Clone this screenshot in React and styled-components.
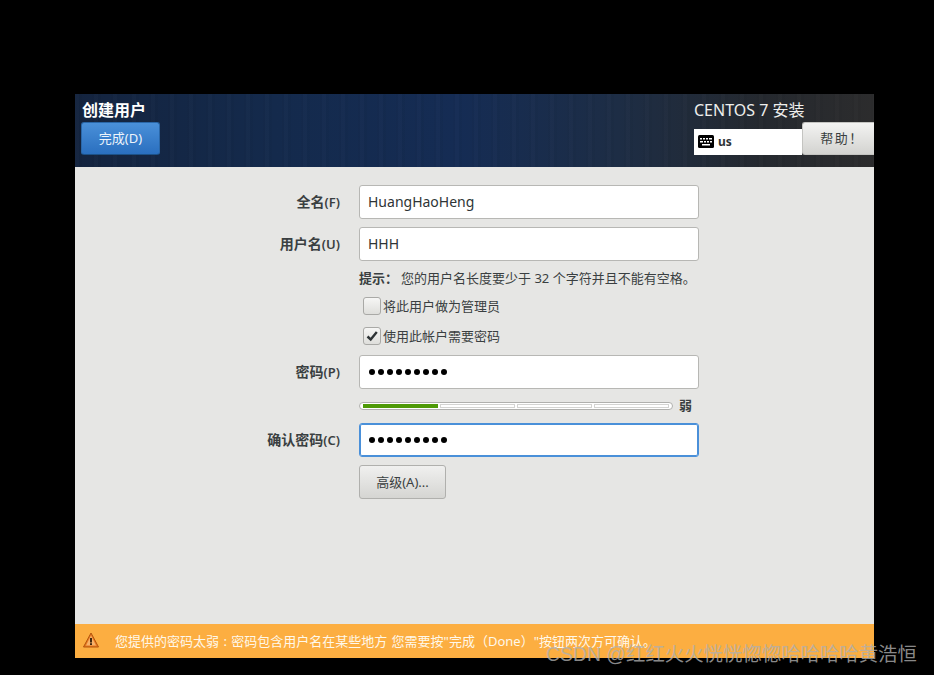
import React from 'react';
import styled, { createGlobalStyle } from 'styled-components';

const GlobalStyle = createGlobalStyle`
  html, body {
    margin: 0;
    height: 100%;
    background: #000;
  }
  body {
    font-family: "Noto Sans", "Noto Sans CJK SC", sans-serif;
    font-size: 13px;
    color: #2e3436;
  }
`;

const Screen = styled.div`
  position: relative;
  width: 934px;
  height: 675px;
  padding: 94px 60px 17px 75px;
  box-sizing: border-box;
  overflow: hidden;
  background: #000;
`;

const Installer = styled.div`
  width: 799px;
  height: 564px;
  display: flex;
  flex-direction: column;
  background: #e6e6e4;
`;

const Header = styled.header`
  height: 73px;
  flex: none;
  display: flex;
  justify-content: space-between;
  box-sizing: border-box;
  background:
    repeating-linear-gradient(90deg, rgba(255, 255, 255, 0.01) 0 4px, rgba(0, 0, 0, 0.03) 4px 7px, rgba(255, 255, 255, 0) 7px 17px, rgba(0, 0, 0, 0.025) 17px 19px),
    linear-gradient(90deg, #14243f 0%, #142a4c 25%, #152c54 48%, #1d2d45 68%, #25292f 86%, #2c2c2d 100%);
`;

const HeaderLeft = styled.div`
  display: flex;
  flex-direction: column;
  align-items: flex-start;
  padding: 7px 0 0 6px;
`;

const Title = styled.h1`
  margin: 0 0 3px 1px;
  font-size: 16px;
  line-height: 18px;
  font-weight: 700;
  color: #fff;
`;

const DoneButton = styled.button`
  width: 79px;
  height: 33px;
  padding: 0 0 2px;
  font: inherit;
  font-size: 13px;
  color: #eef4fb;
  border: 1px solid #2a67a8;
  border-bottom-color: #1c5187;
  border-radius: 3px;
  background: linear-gradient(#4a90d9, #2a6fbf);
`;

const HeaderRight = styled.div`
  width: 180px;
  display: flex;
  flex-direction: column;
  padding-top: 7px;
  box-sizing: border-box;
`;

const Product = styled.div`
  font-size: 16px;
  line-height: 18px;
  white-space: nowrap;
  color: #eeeeec;
`;

const HeaderControls = styled.div`
  display: flex;
  align-items: flex-end;
  margin-top: 3px;
`;

const KeyboardBox = styled.div`
  width: 108px;
  height: 26px;
  display: flex;
  align-items: center;
  gap: 4px;
  padding: 0 0 1px 4px;
  box-sizing: border-box;
  background: #fff;
  font-size: 12px;
  font-weight: 700;
  color: #2e3436;
`;

const HelpButton = styled.button`
  width: 72px;
  height: 33px;
  padding: 0 0 2px 7px;
  font-family: "Noto Sans CJK SC", sans-serif;
  font-size: 13px;
  letter-spacing: 1.5px;
  color: #3a3f41;
  border: 1px solid #c4c4c1;
  border-right: none;
  border-radius: 3px 0 0 3px;
  background: linear-gradient(#f3f3f2, #d3d3d0);
`;

const Content = styled.main`
  flex: 1;
  padding: 18px 0 0 0;
`;

const Row = styled.div`
  display: grid;
  grid-template-columns: 265px 340px;
  column-gap: 19px;
  align-items: center;
  height: ${(p) => p.$height || 34}px;
  margin-bottom: ${(p) => p.$gap || 0}px;
`;

const Label = styled.label`
  grid-column: 1;
  padding-bottom: 2px;
  text-align: right;
  white-space: nowrap;
  font-size: 14px;
  font-weight: 700;
  color: #3a3f41;

  span {
    font-size: 13px;
    font-weight: 600;
  }
`;

const Field = styled.div`
  grid-column: 2;
  height: 34px;
  display: flex;
  align-items: center;
  padding: 0 8px 2px;
  box-sizing: border-box;
  background: #fff;
  border: 1px solid ${(p) => (p.$focused ? '#4a90d9' : '#b7b7b4')};
  box-shadow: ${(p) => (p.$focused ? '0 0 0 1px #4a90d9 inset' : 'none')};
  border-radius: 3px;
  font-size: 14px;
  color: #2e3436;
`;

const Dots = styled.div`
  display: flex;
  gap: 3px;
  padding: 2px 0 0 1px;
`;

const Dot = styled.span`
  width: 6px;
  height: 6px;
  border-radius: 50%;
  background: #000;
`;

const Hint = styled.p`
  grid-column: 2;
  margin: 0;
  padding-bottom: 2px;
  font-size: 13px;
  white-space: nowrap;
  color: #3a3f41;

  b {
    margin-right: 3px;
    font-weight: 700;
  }
`;

const CheckLine = styled.div`
  grid-column: 2;
  display: flex;
  align-items: center;
  gap: 2px;
  margin-left: 4px;
  font-size: 13px;
  color: #3a3f41;
`;

const CheckText = styled.span`
  margin-bottom: 2px;
`;

const CheckBox = styled.span`
  width: 16px;
  height: 16px;
  display: flex;
  align-items: center;
  justify-content: center;
  border: 1px solid #a9a9a6;
  border-radius: 3px;
  background: linear-gradient(#f6f6f5, #dededb);
`;

const MeterRow = styled.div`
  grid-column: 2;
  display: flex;
  align-items: center;
`;

const MeterWrap = styled.div`
  width: 314px;
  height: 8px;
  display: flex;
  gap: 2px;
  padding: 1px 3px;
  box-sizing: border-box;
  background: #fff;
  border: 1px solid #b0b0ad;
  border-radius: 4px;
`;

const MeterCell = styled.span`
  flex: 1;
  border: 1px solid ${(p) => (p.$on ? '#4e9a06' : '#d4d4d2')};
  background: ${(p) => (p.$on ? '#4e9a06' : '#fff')};
`;

const MeterText = styled.span`
  margin: 0 0 3px 6px;
  font-size: 13px;
  font-weight: 700;
  color: #3a3f41;
`;

const AdvancedButton = styled.button`
  grid-column: 2;
  width: 87px;
  height: 34px;
  padding: 0 0 2px;
  font: inherit;
  font-size: 13px;
  color: #3a3f41;
  border: 1px solid #b0b0ad;
  border-radius: 3px;
  background: linear-gradient(#f0f0ef, #d5d5d2);
`;

const WarningBar = styled.footer`
  height: 34px;
  flex: none;
  display: flex;
  align-items: center;
  gap: 16px;
  padding: 0 0 2px 8px;
  box-sizing: border-box;
  background: #fcae41;
  color: #fff8ea;
  font-size: 13px;
  word-spacing: 1px;
  white-space: nowrap;
`;

const Watermark = styled.div`
  position: absolute;
  left: 546px;
  top: 641px;
  font-family: "Liberation Sans", "Noto Sans CJK SC", sans-serif;
  font-size: 19.4px;
  line-height: 26px;
  white-space: nowrap;
  color: rgba(175, 175, 175, 0.8);
`;

function KeyboardIcon() {
  return (
    <svg width="16" height="13" viewBox="0 0 16 13">
      <rect width="16" height="13" rx="1.5" fill="#000" />
      <path d="M2 3h2v1.5H2zM5 3h2v1.5H5zM8 3h2v1.5H8zM11 3h3v1.5h-3zM2 6h3v1.5H2zM6 6h2v1.5H6zM9 6h2v1.5H9zM12 6h2v1.5h-2zM4 9h8v1.5H4z" fill="#fff" />
    </svg>
  );
}

function CheckMark() {
  return (
    <svg width="14" height="14" viewBox="0 0 14 14">
      <path d="M2.5 7.5 L5.7 10.5 L11.8 3" fill="none" stroke="#2e3436" strokeWidth="2.4" />
    </svg>
  );
}

function WarningIcon() {
  return (
    <svg width="16" height="16" viewBox="0 0 16 16">
      <path d="M8 1 L15.5 15 H0.5 Z" fill="#e8791f" stroke="#b2540f" strokeWidth="1" strokeLinejoin="round" />
      <path d="M8 3.5 L13 13.5 H3 Z" fill="#f6b26b" />
      <rect x="7.1" y="6" width="1.8" height="4.5" fill="#2e1a08" />
      <rect x="7.1" y="11.2" width="1.8" height="1.8" fill="#2e1a08" />
    </svg>
  );
}

function PasswordDots() {
  return (
    <Dots>
      {Array.from({ length: 9 }).map((_, i) => (
        <Dot key={i} />
      ))}
    </Dots>
  );
}

export default function App() {
  return (
    <Screen>
      <GlobalStyle />
      <Installer>
        <Header>
          <HeaderLeft>
            <Title>创建用户</Title>
            <DoneButton>完成(D)</DoneButton>
          </HeaderLeft>
          <HeaderRight>
            <Product>CENTOS 7 安装</Product>
            <HeaderControls>
              <KeyboardBox>
                <KeyboardIcon />
                us
              </KeyboardBox>
              <HelpButton>帮助！</HelpButton>
            </HeaderControls>
          </HeaderRight>
        </Header>
        <Content>
          <Row $gap={8}>
            <Label>全名<span>(F)</span></Label>
            <Field>HuangHaoHeng</Field>
          </Row>
          <Row>
            <Label>用户名<span>(U)</span></Label>
            <Field>HHH</Field>
          </Row>
          <Row>
            <Hint><b>提示：</b>您的用户名长度要少于 32 个字符并且不能有空格。</Hint>
          </Row>
          <Row $height={22} $gap={8}>
            <CheckLine>
              <CheckBox />
              <CheckText>将此用户做为管理员</CheckText>
            </CheckLine>
          </Row>
          <Row $height={22} $gap={8}>
            <CheckLine>
              <CheckBox><CheckMark /></CheckBox>
              <CheckText>使用此帐户需要密码</CheckText>
            </CheckLine>
          </Row>
          <Row>
            <Label>密码<span>(P)</span></Label>
            <Field><PasswordDots /></Field>
          </Row>
          <Row>
            <MeterRow>
              <MeterWrap>
                <MeterCell $on />
                <MeterCell />
                <MeterCell />
                <MeterCell />
              </MeterWrap>
              <MeterText>弱</MeterText>
            </MeterRow>
          </Row>
          <Row $gap={8}>
            <Label>确认密码<span>(C)</span></Label>
            <Field $focused><PasswordDots /></Field>
          </Row>
          <Row>
            <AdvancedButton>高级(A)...</AdvancedButton>
          </Row>
        </Content>
        <WarningBar>
          <WarningIcon />
          您提供的密码太弱 : 密码包含用户名在某些地方 您需要按"完成（Done）"按钮两次方可确认。
        </WarningBar>
      </Installer>
      <Watermark>CSDN @红红火火恍恍惚惚哈哈哈哈黄浩恒</Watermark>
    </Screen>
  );
}
